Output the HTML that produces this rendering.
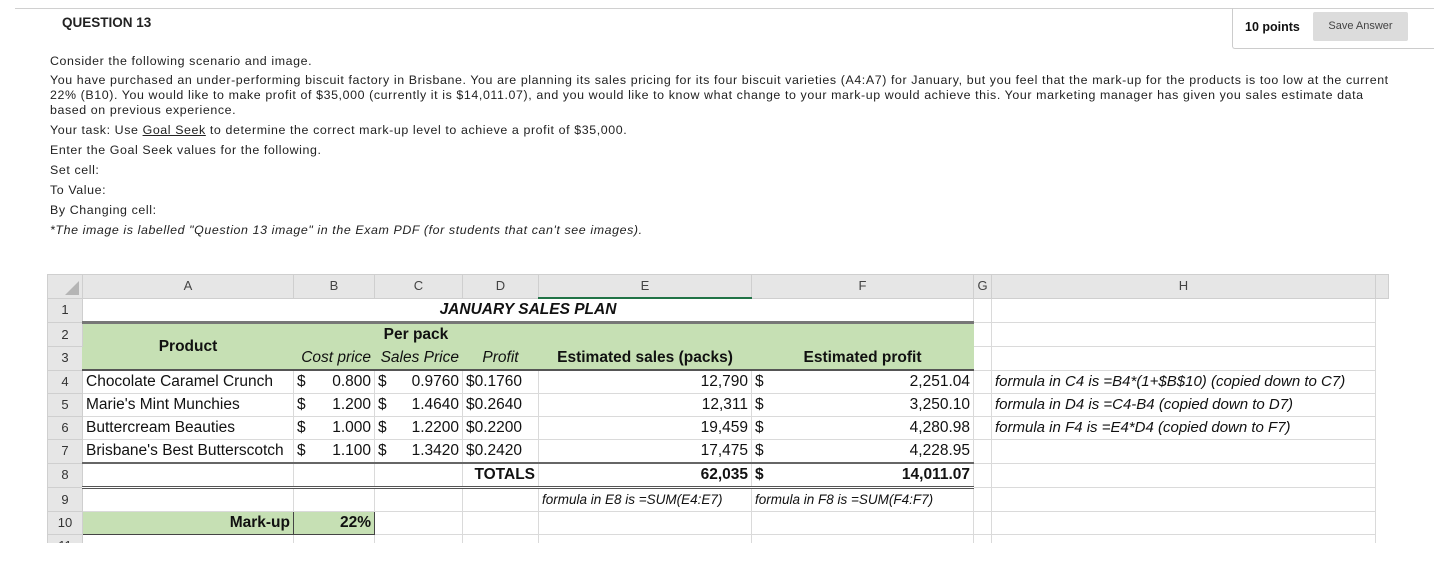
<!DOCTYPE html>
<html><head><meta charset="utf-8"><style>
body{margin:0;width:1434px;height:578px;background:#fff;position:relative;overflow:hidden;font-family:"Liberation Sans",sans-serif;}
.topline{position:absolute;left:15px;top:8px;width:1419px;height:1px;background:#d0d0d0}
.q{position:absolute;left:62px;top:15px;font-weight:bold;font-size:13.5px;color:#222}
.pts{position:absolute;left:1232px;top:8px;width:202px;height:40px;border-left:1px solid #ccc;border-bottom:1px solid #ccc;border-bottom-left-radius:3px}
.pts b{position:absolute;left:12px;top:12px;font-size:12.5px;color:#111}
.btn{position:absolute;left:80px;top:4px;width:95px;height:29px;background:#dcdcdc;border-radius:2px;font-size:11px;color:#444;text-align:center;line-height:29px}
.txt{position:absolute;left:50px;font-size:12.4px;letter-spacing:0.6px;color:#222;white-space:nowrap;line-height:15px}
table{position:absolute;left:47px;top:274px;border-collapse:collapse;table-layout:fixed;font-size:15.5px;color:#111}
td{border:1px solid #dadada;padding:0 3px;height:22px;white-space:nowrap;overflow:hidden;line-height:20px}
tr.h td{background:#e6e6e6;color:#444;text-align:center;height:22px;font-size:13px;border-color:#cfcfcf}
td.rn{background:#e6e6e6;color:#333;text-align:center;font-size:13px;padding:0;border-color:#cfcfcf}
.g{background:#c6e0b4;border-color:#c6e0b4}
.b{font-weight:bold}.i{font-style:italic}.r{text-align:right}.c{text-align:center}
.acc{display:flex;justify-content:space-between}
.tb{border-bottom:3px solid #666}
.fm{font-style:italic;font-size:15px}
</style></head><body>
<div class="topline"></div>
<div class="q">QUESTION 13</div>
<div class="pts"><b>10 points</b><div class="btn">Save Answer</div></div>
<div class="txt" style="top:54px">Consider the following scenario and image.</div>
<div class="txt" style="top:73px">You have purchased an under-performing biscuit factory in Brisbane. You are planning its sales pricing for its four biscuit varieties (A4:A7) for January, but you feel that the mark-up for the products is too low at the current<br>22% (B10). You would like to make profit of $35,000 (currently it is $14,011.07), and you would like to know what change to your mark-up would achieve this. Your marketing manager has given you sales estimate data<br>based on previous experience.</div>
<div class="txt" style="top:123px">Your task: Use <u>Goal Seek</u> to determine the correct mark-up level to achieve a profit of $35,000.</div>
<div class="txt" style="top:143px">Enter the Goal Seek values for the following.</div>
<div class="txt" style="top:163px">Set cell:</div>
<div class="txt" style="top:183px">To Value:</div>
<div class="txt" style="top:203px">By Changing cell:</div>
<div class="txt" style="top:223px;font-style:italic">*The image is labelled "Question 13 image" in the Exam PDF (for students that can't see images).</div>

<table>
<colgroup><col style="width:34px"><col style="width:211px"><col style="width:81px"><col style="width:88px"><col style="width:76px"><col style="width:213px"><col style="width:222px"><col style="width:18px"><col style="width:384px"><col style="width:13px"></colgroup>
<tr class="h"><td style="background:#e6e6e6"><svg width="14" height="14" style="display:block;margin:4px 0 0 14px"><polygon points="14,0 14,14 0,14" fill="#b5b5b5"/></svg></td><td>A</td><td>B</td><td>C</td><td>D</td><td style="border-bottom:2px solid #217346">E</td><td>F</td><td>G</td><td>H</td><td></td></tr>
<tr><td class="rn">1</td><td colspan="6" class="b i c tb" style="border-bottom-color:#777">JANUARY SALES PLAN</td><td></td><td></td><td style="border:none"></td></tr>
<tr><td class="rn">2</td><td rowspan="2" class="g b c" style="border-bottom:2px solid #555">Product</td><td colspan="3" class="g b c">Per pack</td><td class="g"></td><td class="g"></td><td></td><td></td><td style="border:none"></td></tr>
<tr><td class="rn">3</td><td class="g i r" style="border-bottom:2px solid #555">Cost price</td><td class="g i r" style="border-bottom:2px solid #555">Sales Price</td><td class="g i c" style="border-bottom:2px solid #555">Profit</td><td class="g b c" style="border-bottom:2px solid #555">Estimated sales (packs)</td><td class="g b c" style="border-bottom:2px solid #555">Estimated profit</td><td></td><td></td><td style="border:none"></td></tr>
<tr><td class="rn">4</td><td>Chocolate Caramel Crunch</td><td><div class="acc"><span>$</span><span>0.800</span></div></td><td><div class="acc"><span>$</span><span>0.9760</span></div></td><td>$0.1760</td><td class="r">12,790</td><td><div class="acc"><span>$</span><span>2,251.04</span></div></td><td></td><td class="fm">formula in C4 is =B4*(1+$B$10) (copied down to C7)</td><td style="border:none"></td></tr>
<tr><td class="rn">5</td><td>Marie's Mint Munchies</td><td><div class="acc"><span>$</span><span>1.200</span></div></td><td><div class="acc"><span>$</span><span>1.4640</span></div></td><td>$0.2640</td><td class="r">12,311</td><td><div class="acc"><span>$</span><span>3,250.10</span></div></td><td></td><td class="fm">formula in D4 is =C4-B4 (copied down to D7)</td><td style="border:none"></td></tr>
<tr><td class="rn">6</td><td>Buttercream Beauties</td><td><div class="acc"><span>$</span><span>1.000</span></div></td><td><div class="acc"><span>$</span><span>1.2200</span></div></td><td>$0.2200</td><td class="r">19,459</td><td><div class="acc"><span>$</span><span>4,280.98</span></div></td><td></td><td class="fm">formula in F4 is =E4*D4 (copied down to F7)</td><td style="border:none"></td></tr>
<tr><td class="rn">7</td><td style="border-bottom:2px solid #666">Brisbane's Best Butterscotch</td><td style="border-bottom:2px solid #666"><div class="acc"><span>$</span><span>1.100</span></div></td><td style="border-bottom:2px solid #666"><div class="acc"><span>$</span><span>1.3420</span></div></td><td style="border-bottom:2px solid #666">$0.2420</td><td class="r" style="border-bottom:2px solid #666">17,475</td><td style="border-bottom:2px solid #666"><div class="acc"><span>$</span><span>4,228.95</span></div></td><td></td><td></td><td style="border:none"></td></tr>
<tr><td class="rn">8</td><td style="border-bottom:3px double #555"></td><td style="border-bottom:3px double #555"></td><td style="border-bottom:3px double #555"></td><td class="b r" style="border-bottom:3px double #555">TOTALS</td><td class="b r" style="border-bottom:3px double #555">62,035</td><td class="b" style="border-bottom:3px double #555"><div class="acc"><span>$</span><span>14,011.07</span></div></td><td></td><td></td><td style="border:none"></td></tr>
<tr><td class="rn">9</td><td></td><td></td><td></td><td></td><td class="fm" style="font-size:13.5px">formula in E8 is =SUM(E4:E7)</td><td class="fm" style="font-size:13.5px">formula in F8 is =SUM(F4:F7)</td><td></td><td></td><td style="border:none"></td></tr>
<tr><td class="rn">10</td><td class="g b r" style="border:1px solid #444">Mark-up</td><td class="g b r" style="border:1px solid #444">22%</td><td></td><td></td><td></td><td></td><td></td><td></td><td style="border:none"></td></tr>
<tr><td class="rn">11</td><td></td><td></td><td></td><td></td><td></td><td></td><td></td><td></td><td style="border:none"></td></tr>
</table>
<div style="position:absolute;left:0;top:543px;width:1434px;height:35px;background:#fff"></div>
</body></html>
